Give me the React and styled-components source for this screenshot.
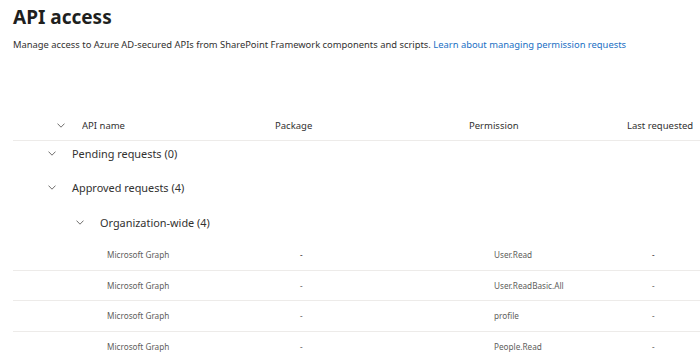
import React from "react";
import styled, { createGlobalStyle } from "styled-components";

const GlobalStyle = createGlobalStyle`
  html, body {
    margin: 0;
    padding: 0;
    background: #ffffff;
  }
  body {
    font-family: "Noto Sans", "Open Sans", sans-serif;
    color: #323130;
    overflow: hidden;
  }
`;

const Page = styled.div`
  padding: 4px 0 0 13px;
`;

const Title = styled.h1`
  margin: 0;
  font-size: 19px;
  line-height: 26px;
  font-weight: 700;
  color: #201f1e;
`;

const Description = styled.p`
  margin: 8px 0 0;
  font-size: 9.4px;
  line-height: 14px;
  color: #323130;
`;

const Link = styled.a`
  color: #1a6fc4;
  text-decoration: none;
`;

const Table = styled.div`
  margin-top: 58px;
`;

const columns = (first) => `${first}px 193px 194px 158px 1fr`;

const HeaderRow = styled.div`
  display: grid;
  grid-template-columns: ${columns(69)};
  align-items: center;
  height: 30px;
  border-bottom: 1px solid #edebe9;
  font-size: 9.5px;
  color: #323130;
`;

const HeaderCell = styled.div`
  white-space: nowrap;
  overflow: hidden;
`;

const ExpandCell = styled.div`
  display: flex;
  align-items: center;
  padding-left: 44px;
`;

const GroupRow = styled.div`
  display: flex;
  align-items: center;
  height: ${(p) => p.$height}px;
  padding-bottom: ${(p) => p.$pad || 0}px;
  padding-left: ${(p) => 35 + p.$level * 28}px;
  font-size: 10.9px;
  color: #323130;
`;

const ChevronBox = styled.span`
  display: inline-flex;
  align-items: center;
  width: 24px;
`;

const DataRow = styled.div`
  display: grid;
  grid-template-columns: ${columns(94)};
  align-items: center;
  height: 29.5px;
  border-bottom: 1px solid #edebe9;
  font-size: 8.2px;
  color: #605e5c;
`;

const DataCell = styled.div`
  grid-column: ${(p) => p.$col};
  color: ${(p) => (p.$strong ? "#323130" : "inherit")};
  white-space: nowrap;
`;

const Chevron = () => (
  <svg width="8" height="5" viewBox="0 0 8 5" fill="none">
    <path d="M0.5 0.6 L4 4.2 L7.5 0.6" stroke="#605e5c" strokeWidth="0.9" />
  </svg>
);

const rows = [
  { api: "Microsoft Graph", pkg: "-", perm: "User.Read", last: "-", strong: true },
  { api: "Microsoft Graph", pkg: "-", perm: "User.ReadBasic.All", last: "-" },
  { api: "Microsoft Graph", pkg: "-", perm: "profile", last: "-" },
  { api: "Microsoft Graph", pkg: "-", perm: "People.Read", last: "-" },
];

export default function App() {
  return (
    <>
      <GlobalStyle />
      <Page>
        <Title>API access</Title>
        <Description>
          Manage access to Azure AD-secured APIs from SharePoint Framework components and scripts.{" "}
          <Link href="#">Learn about managing permission requests</Link>
        </Description>
        <Table>
          <HeaderRow>
            <ExpandCell>
              <Chevron />
            </ExpandCell>
            <HeaderCell>API name</HeaderCell>
            <HeaderCell>Package</HeaderCell>
            <HeaderCell>Permission</HeaderCell>
            <HeaderCell>Last requested</HeaderCell>
          </HeaderRow>
          <GroupRow $level={0} $height={24} $pad={5}>
            <ChevronBox>
              <Chevron />
            </ChevronBox>
            Pending requests (0)
          </GroupRow>
          <GroupRow $level={0} $height={34}>
            <ChevronBox>
              <Chevron />
            </ChevronBox>
            Approved requests (4)
          </GroupRow>
          <GroupRow $level={1} $height={36}>
            <ChevronBox>
              <Chevron />
            </ChevronBox>
            Organization-wide (4)
          </GroupRow>
          {rows.map((r, i) => (
            <DataRow key={i}>
              <DataCell $col={2}>{r.api}</DataCell>
              <DataCell $col={3} $strong={r.strong}>{r.pkg}</DataCell>
              <DataCell $col={4}>{r.perm}</DataCell>
              <DataCell $col={5} $strong={r.strong}>{r.last}</DataCell>
            </DataRow>
          ))}
        </Table>
      </Page>
    </>
  );
}
